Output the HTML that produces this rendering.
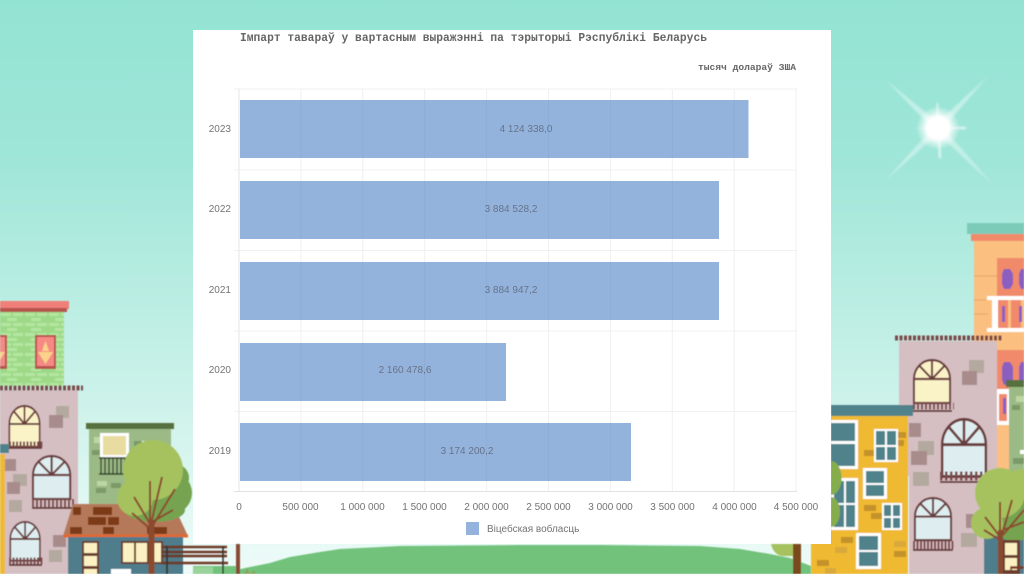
<!DOCTYPE html>
<html lang="be"><head><meta charset="utf-8"><title>Імпарт</title>
<style>html,body{margin:0;padding:0;background:#93e3d3}svg{display:block}text{font-family:"Liberation Sans",sans-serif}</style></head>
<body>
<svg width="1024" height="574" viewBox="0 0 1024 574" xmlns="http://www.w3.org/2000/svg">
<defs>
<linearGradient id="sky" x1="0" y1="0" x2="0" y2="1"><stop offset="0" stop-color="#93e3d3"/><stop offset=".28" stop-color="#9fe6d8"/><stop offset=".55" stop-color="#bdeee4"/><stop offset=".8" stop-color="#d8f5ef"/><stop offset="1" stop-color="#eefbf9"/></linearGradient>
<radialGradient id="glow"><stop offset="0" stop-color="#fff"/><stop offset=".5" stop-color="#fff"/><stop offset=".72" stop-color="#fff" stop-opacity=".5"/><stop offset="1" stop-color="#fff" stop-opacity="0"/></radialGradient>
<pattern id="brick" width="24" height="10" patternUnits="userSpaceOnUse" x="0" y="312"><rect width="24" height="10" fill="#9ed988"/><rect x="1" y="1" width="10" height="3" fill="#b4e6a0"/><rect x="13" y="1" width="10" height="3" fill="#b4e6a0"/><rect x="7" y="6" width="10" height="3" fill="#b4e6a0"/></pattern>
<filter id="soft"><feGaussianBlur stdDeviation=".45"/></filter>
<filter id="txt"><feGaussianBlur stdDeviation=".25"/></filter>
<filter id="b1"><feGaussianBlur stdDeviation="1.100"/></filter>
<g id="arch"><path d="M1 44V20A19 19 0 0 1 39 20V44Z" stroke="#6b3d3d" stroke-width="2.2"/><path d="M1 20H39M20 1V20M20 20L7 7M20 20L33 7" stroke="#6b3d3d" stroke-width="2.2" fill="none"/></g>
</defs>
<rect width="1024" height="574" fill="url(#sky)"/>
<!-- sun -->
<g filter="url(#b1)" fill="#fff">
<polygon points="886,80 941,125 935,131" opacity=".42"/>
<polygon points="988,76 935,125 941,131" opacity=".42"/>
<polygon points="886,180 935,125 941,131" opacity=".38"/>
<polygon points="992,184 941,125 935,131" opacity=".38"/>
<polygon points="936.500,103 938,103 941,158 939,158" opacity=".8"/>
<polygon points="911,128 966,127 966,129" opacity=".8"/>
</g>
<circle cx="938" cy="128" r="22" fill="url(#glow)"/>
<g filter="url(#soft)">
<!-- left scene -->
<rect x="0" y="312" width="64" height="74" fill="url(#brick)"/>
<rect x="0" y="301" width="69" height="8" fill="#ef7f78"/><rect x="0" y="308" width="67" height="4" fill="#b5524e"/>
<rect x="35" y="335" width="21" height="34" fill="#b5524e"/><rect x="37" y="337" width="17" height="29" fill="#f58a84"/>
<polygon points="38,352 53,352 45.500,364" fill="#fbd28a"/><polygon points="45.500,341 42,351 49,351" fill="#fbd28a"/>
<rect x="0" y="335" width="7" height="34" fill="#b5524e"/><rect x="0" y="337" width="5" height="29" fill="#f58a84"/><polygon points="0,352 5,352 0,360" fill="#fbd28a"/>
<rect x="0" y="390" width="78" height="184" fill="#d6bfc2"/>
<line x1="0" y1="388" x2="83" y2="388" stroke="#7c4a4a" stroke-width="5" stroke-dasharray="3 1.500"/>
<g fill="#b3a99f"><rect x="56" y="406" width="13" height="12"/><rect x="13" y="474" width="14" height="12"/><rect x="9" y="500" width="13" height="12"/></g>
<g fill="#a88c8c"><rect x="49" y="415" width="14" height="13"/><rect x="5" y="459" width="11" height="12"/><rect x="7" y="482" width="13" height="12"/></g>
<use href="#arch" transform="translate(8.500,405) scale(.8,.95)" fill="#fbf3c8"/>
<line x1="9" y1="444.500" x2="43" y2="444.500" stroke="#7c4a4a" stroke-width="6" stroke-dasharray="2 1.500"/><rect x="9" y="447" width="33" height="2" fill="#6b3d3d"/>
<use href="#arch" transform="translate(32,455) scale(.98,1)" fill="#deeef0"/>
<line x1="32" y1="503" x2="76" y2="503" stroke="#7c4a4a" stroke-width="8" stroke-dasharray="2 2"/><rect x="32" y="507" width="44" height="2" fill="#6b3d3d"/>
<use href="#arch" transform="translate(9.500,521) scale(.78,.9)" fill="#deeef0"/>
<line x1="9" y1="561" x2="43" y2="561" stroke="#7c4a4a" stroke-width="7" stroke-dasharray="2 1.500"/><rect x="9" y="564" width="33" height="2" fill="#6b3d3d"/>
<rect x="53" y="535" width="13" height="12" fill="#a88c8c"/><rect x="49" y="550" width="13" height="12" fill="#b3a99f"/>
<rect x="0" y="454" width="5" height="120" fill="#f0b933"/><rect x="0" y="444" width="9" height="9" fill="#4f828a"/>
<rect x="89" y="429" width="82" height="85" fill="#9cba85"/><rect x="86" y="423" width="88" height="6" fill="#56703f"/>
<g fill="#7c9a68"><rect x="92" y="450" width="8" height="5"/><rect x="96" y="488" width="10" height="5"/><rect x="111" y="483" width="10" height="5"/><rect x="134" y="441" width="8" height="5"/></g>
<g fill="#bcd6a6"><rect x="94" y="437" width="6" height="6"/><rect x="97" y="481" width="10" height="5"/></g>
<rect x="100" y="433" width="29" height="25" fill="#fff"/><rect x="103" y="436" width="23" height="19" fill="#e8dca0"/>
<rect x="142" y="441" width="14" height="14" fill="#fff"/>
<g stroke="#2f3a25" stroke-width="1.300"><path d="M99 458H127M99 474H127" stroke-width="1.500"/><path d="M101 458V474M105 458V474M109 458V474M113 458V474M117 458V474M121 458V474M125 458V474"/></g>
<polygon points="73,504 173,504 188,536 63,536" fill="#b5795a"/>
<path d="M63 536H188" stroke="#e2682f" stroke-width="3"/>
<g fill="#7c3b16"><rect x="93" y="507" width="19" height="8"/><rect x="88" y="517" width="18" height="8"/><rect x="108" y="517" width="11" height="8"/><rect x="70" y="527" width="12" height="7"/><rect x="103" y="527" width="11" height="7"/><rect x="147" y="527" width="20" height="7"/><rect x="73" y="507" width="8" height="8"/></g>
<circle cx="171" cy="493" r="21" fill="#76a350"/><circle cx="175" cy="478" r="14" fill="#76a350"/><ellipse cx="155" cy="510" rx="30" ry="12" fill="#76a350"/>
<circle cx="153" cy="470" r="30" fill="#a5c25f"/><circle cx="135" cy="498" r="18" fill="#a5c25f"/><rect x="125" y="478" width="20" height="16" fill="#a5c25f"/>
<rect x="68" y="537" width="115" height="37" fill="#4f7d8c"/>
<rect x="82" y="541" width="17" height="33" fill="#6b3d2f"/><rect x="84" y="543" width="13" height="10" fill="#fbf1c2"/><rect x="84" y="556" width="13" height="10" fill="#fbf1c2"/><rect x="84" y="569" width="13" height="5" fill="#fbf1c2"/>
<rect x="121" y="541" width="42" height="23" fill="#6b3d2f"/><rect x="123" y="543" width="11" height="19" fill="#fbf1c2"/><rect x="136" y="543" width="11" height="19" fill="#fbf1c2"/><rect x="149" y="543" width="12" height="19" fill="#fbf1c2"/>
<rect x="111" y="569" width="20" height="5" fill="#fff"/>
<path d="M151.500 574V522" stroke="#8b4a2f" stroke-width="6"/>
<path d="M150 525V481M150 528L162 477M153 525L175 489M152 527L134 497M150 523L173 510M148 527L132 513" stroke="#8b4a2f" stroke-width="2" fill="none"/>
<!-- right scene -->
<rect x="974" y="241" width="50" height="240" fill="#fbbf80"/>
<rect x="967" y="223" width="57" height="11" fill="#7ccbb8"/><rect x="971" y="234" width="53" height="7" fill="#f08a6a"/>
<path d="M974 276H997M974 314H988M974 300H986M974 450H997M974 462H997M974 440H997" stroke="#e8a464" stroke-width="1"/>
<rect x="997" y="258" width="27" height="38" fill="#f08a6a"/>
<g fill="#8a5fc0"><polygon points="1004,269 1010,269 1013,274 1013,284 1010,289 1004,289 1002,284 1002,274"/><polygon points="1021,269 1024,269 1024,289 1021,289 1019,284 1019,274"/></g>
<rect x="987" y="296" width="37" height="4" fill="#fff"/><rect x="987" y="328" width="37" height="4" fill="#fff"/>
<rect x="992" y="298" width="6" height="32" fill="#fff"/>
<rect x="998" y="300" width="10" height="28" fill="#f08a6a"/><rect x="1011" y="300" width="10" height="28" fill="#f08a6a"/>
<rect x="1002" y="306" width="3" height="16" fill="#8a5fc0"/><rect x="1019" y="306" width="3" height="16" fill="#8a5fc0"/>
<rect x="997" y="350" width="27" height="50" fill="#f08a6a"/>
<g fill="#8a5fc0"><polygon points="1004,362 1010,362 1013,367 1013,380 1010,385 1004,385 1002,380 1002,367"/><polygon points="1021,362 1024,362 1024,385 1021,385 1019,380 1019,367"/></g>
<rect x="997" y="389" width="12" height="36" fill="#fff"/><rect x="999" y="394" width="8" height="27" fill="#f08a6a"/><rect x="1003" y="398" width="3" height="16" fill="#8a5fc0"/>
<rect x="1009" y="387" width="15" height="85" fill="#9cba85"/><rect x="1006" y="380" width="18" height="7" fill="#56703f"/>
<g fill="#7c9a68"><rect x="1012" y="405" width="8" height="5"/><rect x="1013" y="458" width="11" height="6"/></g><rect x="1016" y="396" width="8" height="6" fill="#bcd6a6"/><rect x="1020" y="450" width="4" height="4" fill="#fff"/>
<rect x="899" y="341" width="98" height="135" fill="#d6bfc2"/><rect x="909" y="470" width="75" height="104" fill="#d6bfc2"/>
<line x1="895" y1="338" x2="1002" y2="338" stroke="#7c4a4a" stroke-width="5" stroke-dasharray="3 1.500"/>
<g fill="#b3a99f"><rect x="969" y="360" width="15" height="13"/><rect x="918" y="441" width="16" height="14"/><rect x="913" y="472" width="16" height="14"/><rect x="961" y="533" width="16" height="14"/></g>
<g fill="#a88c8c"><rect x="962" y="371" width="15" height="14"/><rect x="909" y="423" width="12" height="14"/><rect x="911" y="451" width="16" height="14"/></g>
<rect x="966" y="514" width="8" height="14" fill="#a88c8c"/>
<use href="#arch" transform="translate(913,359) scale(.95,1)" fill="#fbf3c8"/>
<line x1="913" y1="406" x2="954" y2="406" stroke="#7c4a4a" stroke-width="7" stroke-dasharray="2 2"/><rect x="913" y="410" width="39" height="2" fill="#6b3d3d"/>
<use href="#arch" transform="translate(941,418) scale(1.150,1.330)" fill="#deeef0"/>
<line x1="940" y1="476" x2="994" y2="476" stroke="#7c4a4a" stroke-width="9" stroke-dasharray="2.500 2.500"/><rect x="940" y="481" width="48" height="2" fill="#6b3d3d"/>
<use href="#arch" transform="translate(914,497) scale(.95,.98)" fill="#deeef0"/>
<line x1="913" y1="545" x2="954" y2="545" stroke="#7c4a4a" stroke-width="8" stroke-dasharray="2 1.500"/><rect x="913" y="549" width="40" height="2" fill="#6b3d3d"/>
<rect x="811" y="416" width="97" height="158" fill="#f0b933"/>
<rect x="831" y="405" width="82" height="11" fill="#4f828a"/>
<g fill="#c4922a"><rect x="864" y="450" width="10" height="6"/><rect x="897" y="432" width="9" height="6"/><rect x="897" y="440" width="7" height="6"/><rect x="864" y="505" width="12" height="6"/><rect x="871" y="513" width="11" height="6"/><rect x="841" y="537" width="12" height="6"/><rect x="894" y="551" width="12" height="6"/><rect x="817" y="560" width="12" height="6"/></g>
<g fill="#d9a93a"><rect x="894" y="541" width="12" height="6"/><rect x="835" y="547" width="12" height="6"/><rect x="825" y="568" width="11" height="6"/></g>
<rect x="831" y="420" width="27" height="49" fill="#fff"/><rect x="831" y="423" width="24" height="18" fill="#4f828a"/><rect x="831" y="444" width="24" height="22" fill="#4f828a"/>
<rect x="874" y="429" width="24" height="33" fill="#fff"/><rect x="876" y="431" width="9" height="14" fill="#4f828a"/><rect x="887" y="431" width="9" height="14" fill="#4f828a"/><rect x="876" y="447" width="9" height="13" fill="#4f828a"/><rect x="887" y="447" width="9" height="13" fill="#4f828a"/>
<rect x="863" y="468" width="24" height="31" fill="#fff"/><rect x="866" y="471" width="18" height="12" fill="#4f828a"/><rect x="866" y="485" width="18" height="11" fill="#4f828a"/>
<rect x="882" y="503" width="20" height="27" fill="#fff"/><rect x="884" y="505" width="7" height="11" fill="#4f828a"/><rect x="893" y="505" width="7" height="11" fill="#4f828a"/><rect x="884" y="518" width="7" height="10" fill="#4f828a"/><rect x="893" y="518" width="7" height="10" fill="#4f828a"/>
<rect x="831" y="478" width="27" height="52" fill="#fff"/><rect x="834" y="481" width="10" height="22" fill="#4f828a"/><rect x="846" y="481" width="9" height="22" fill="#4f828a"/><rect x="834" y="505" width="10" height="22" fill="#4f828a"/><rect x="846" y="505" width="9" height="22" fill="#4f828a"/>
<rect x="856" y="533" width="25" height="36" fill="#fff"/><rect x="859" y="536" width="19" height="14" fill="#4f828a"/><rect x="859" y="552" width="19" height="14" fill="#4f828a"/>
<path d="M831 461a10 16 0 0 1 0 34ZM831 497a9 15 0 0 1 0 30Z" fill="#86ad4c"/>
<rect x="984" y="530" width="40" height="44" fill="#4f7d8c"/>
<circle cx="1014" cy="525" r="17" fill="#76a350"/><circle cx="1024" cy="510" r="18" fill="#76a350"/>
<circle cx="1000" cy="493" r="25" fill="#a5c25f"/><circle cx="987" cy="523" r="16" fill="#a5c25f"/><circle cx="1022" cy="484" r="15" fill="#a5c25f"/>
<rect x="1002" y="540" width="18" height="34" fill="#6b3d2f"/><rect x="1005" y="543" width="12" height="12" fill="#fbf1c2"/><rect x="1005" y="558" width="12" height="12" fill="#fbf1c2"/>
<path d="M1000.500 574V530" stroke="#8b4a2f" stroke-width="5"/>
<path d="M1000 540V502M1002 535L1012 500M1003 535L1024 510M1001 538L985 517M1003 530L1024 522M1000 540L984 530" stroke="#8b4a2f" stroke-width="2" fill="none"/>
<path d="M1011 574v-7h13M1011 568h13" stroke="#7a3b2a" stroke-width="1.500" fill="none"/>
</g>
<!-- panel -->
<rect x="193" y="30" width="638" height="514" fill="#fff"/>
<!-- ground -->
<g filter="url(#soft)">
<polygon points="193,574 236,570 250,567 270,563 290,557 320,552 340,549 400,546 520,545 600,545 700,546 740,549 770,554 790,558 811,566 811,574" fill="#72c27c"/>
<rect x="193" y="566" width="46" height="8" fill="#72c27c"/>
<rect x="193" y="567" width="20" height="7" fill="#9ad39a"/>
<g stroke="#6e3a28" fill="none"><path d="M162 547H227M162 552H227M162 556H227" stroke-width="2.500"/><path d="M162 563H228" stroke-width="2.500"/><path d="M167 546V574M223 546V574" stroke="#33312c" stroke-width="1.500"/></g>
<rect x="236" y="544" width="4" height="30" fill="#8a4a36"/>
<path d="M244 574l3-6 3 6 4-4 2 4Z" fill="#8aa65a"/>
<path d="M771 544h25v12h-12q-10 0-13-12Z" fill="#a5c25f"/>
<rect x="793" y="544" width="8" height="30" fill="#7a4a1f"/>
</g>
<!-- chart -->
<g filter="url(#txt)">
<g stroke="#f0f0f0" stroke-width="1">
<path d="M234 89H797M234 170H797M234 250.500H797M234 331H797M234 411.500H797"/>
<path d="M300.900 89V491M362.800 89V491M424.700 89V491M486.600 89V491M548.500 89V491M610.400 89V491M672.300 89V491M734.200 89V491M796.100 89V491"/>
</g>
<path d="M234 491.500H797" stroke="#dfe3e6"/>
<path d="M239 89V491" stroke="#e6e6e6"/>
<g fill="#94b3dc"><rect x="240" y="100" width="508.500" height="58"/><rect x="240" y="181" width="479" height="58"/><rect x="240" y="262" width="479" height="58"/><rect x="240" y="343" width="266" height="58"/><rect x="240" y="423" width="391" height="58"/></g>
<g stroke="#7f9fcb" stroke-width="1" opacity=".3"><path d="M300.900 100V158M362.800 100V158M424.700 100V158M486.600 100V158M548.500 100V158M610.400 100V158M672.300 100V158M734.200 100V158"/><path d="M300.900 181V239M362.800 181V239M424.700 181V239M486.600 181V239M548.500 181V239M610.400 181V239M672.300 181V239"/><path d="M300.900 262V320M362.800 262V320M424.700 262V320M486.600 262V320M548.500 262V320M610.400 262V320M672.300 262V320"/><path d="M300.900 343V401M362.800 343V401M424.700 343V401M486.600 343V401"/><path d="M300.900 423V481M362.800 423V481M424.700 423V481M486.600 423V481M548.500 423V481M610.400 423V481"/></g>
<text x="240" y="41" textLength="467" lengthAdjust="spacingAndGlyphs" style="font-family:'Liberation Mono',monospace;font-weight:bold;font-size:11.500px" fill="#666">Імпарт тавараў у вартасным выражэнні па тэрыторыі Рэспублікі Беларусь</text>
<text x="698" y="70" textLength="98" lengthAdjust="spacingAndGlyphs" style="font-family:'Liberation Mono',monospace;font-weight:bold;font-size:9.500px" fill="#666">тысяч долараў ЗША</text>
<g font-size="10" fill="#737373" text-anchor="end"><text x="231" y="132">2023</text><text x="231" y="212">2022</text><text x="231" y="293">2021</text><text x="231" y="373">2020</text><text x="231" y="454">2019</text></g>
<g font-size="10" fill="#66738a" text-anchor="middle"><text x="526" y="132">4 124 338,0</text><text x="511" y="212">3 884 528,2</text><text x="511" y="293">3 884 947,2</text><text x="405" y="373">2 160 478,6</text><text x="467" y="454">3 174 200,2</text></g>
<g font-size="10" fill="#737373" text-anchor="middle"><text x="239" y="510">0</text><text x="300.500" y="510">500 000</text><text x="362.500" y="510">1 000 000</text><text x="424.500" y="510">1 500 000</text><text x="486.500" y="510">2 000 000</text><text x="548.500" y="510">2 500 000</text><text x="610.500" y="510">3 000 000</text><text x="672.500" y="510">3 500 000</text><text x="734.500" y="510">4 000 000</text><text x="796" y="510">4 500 000</text></g>
<rect x="466" y="522" width="13" height="13" fill="#94b3dc"/>
<text x="487" y="532" font-size="10" fill="#737373">Віцебская вобласць</text>
</g>
</svg>
</body></html>
